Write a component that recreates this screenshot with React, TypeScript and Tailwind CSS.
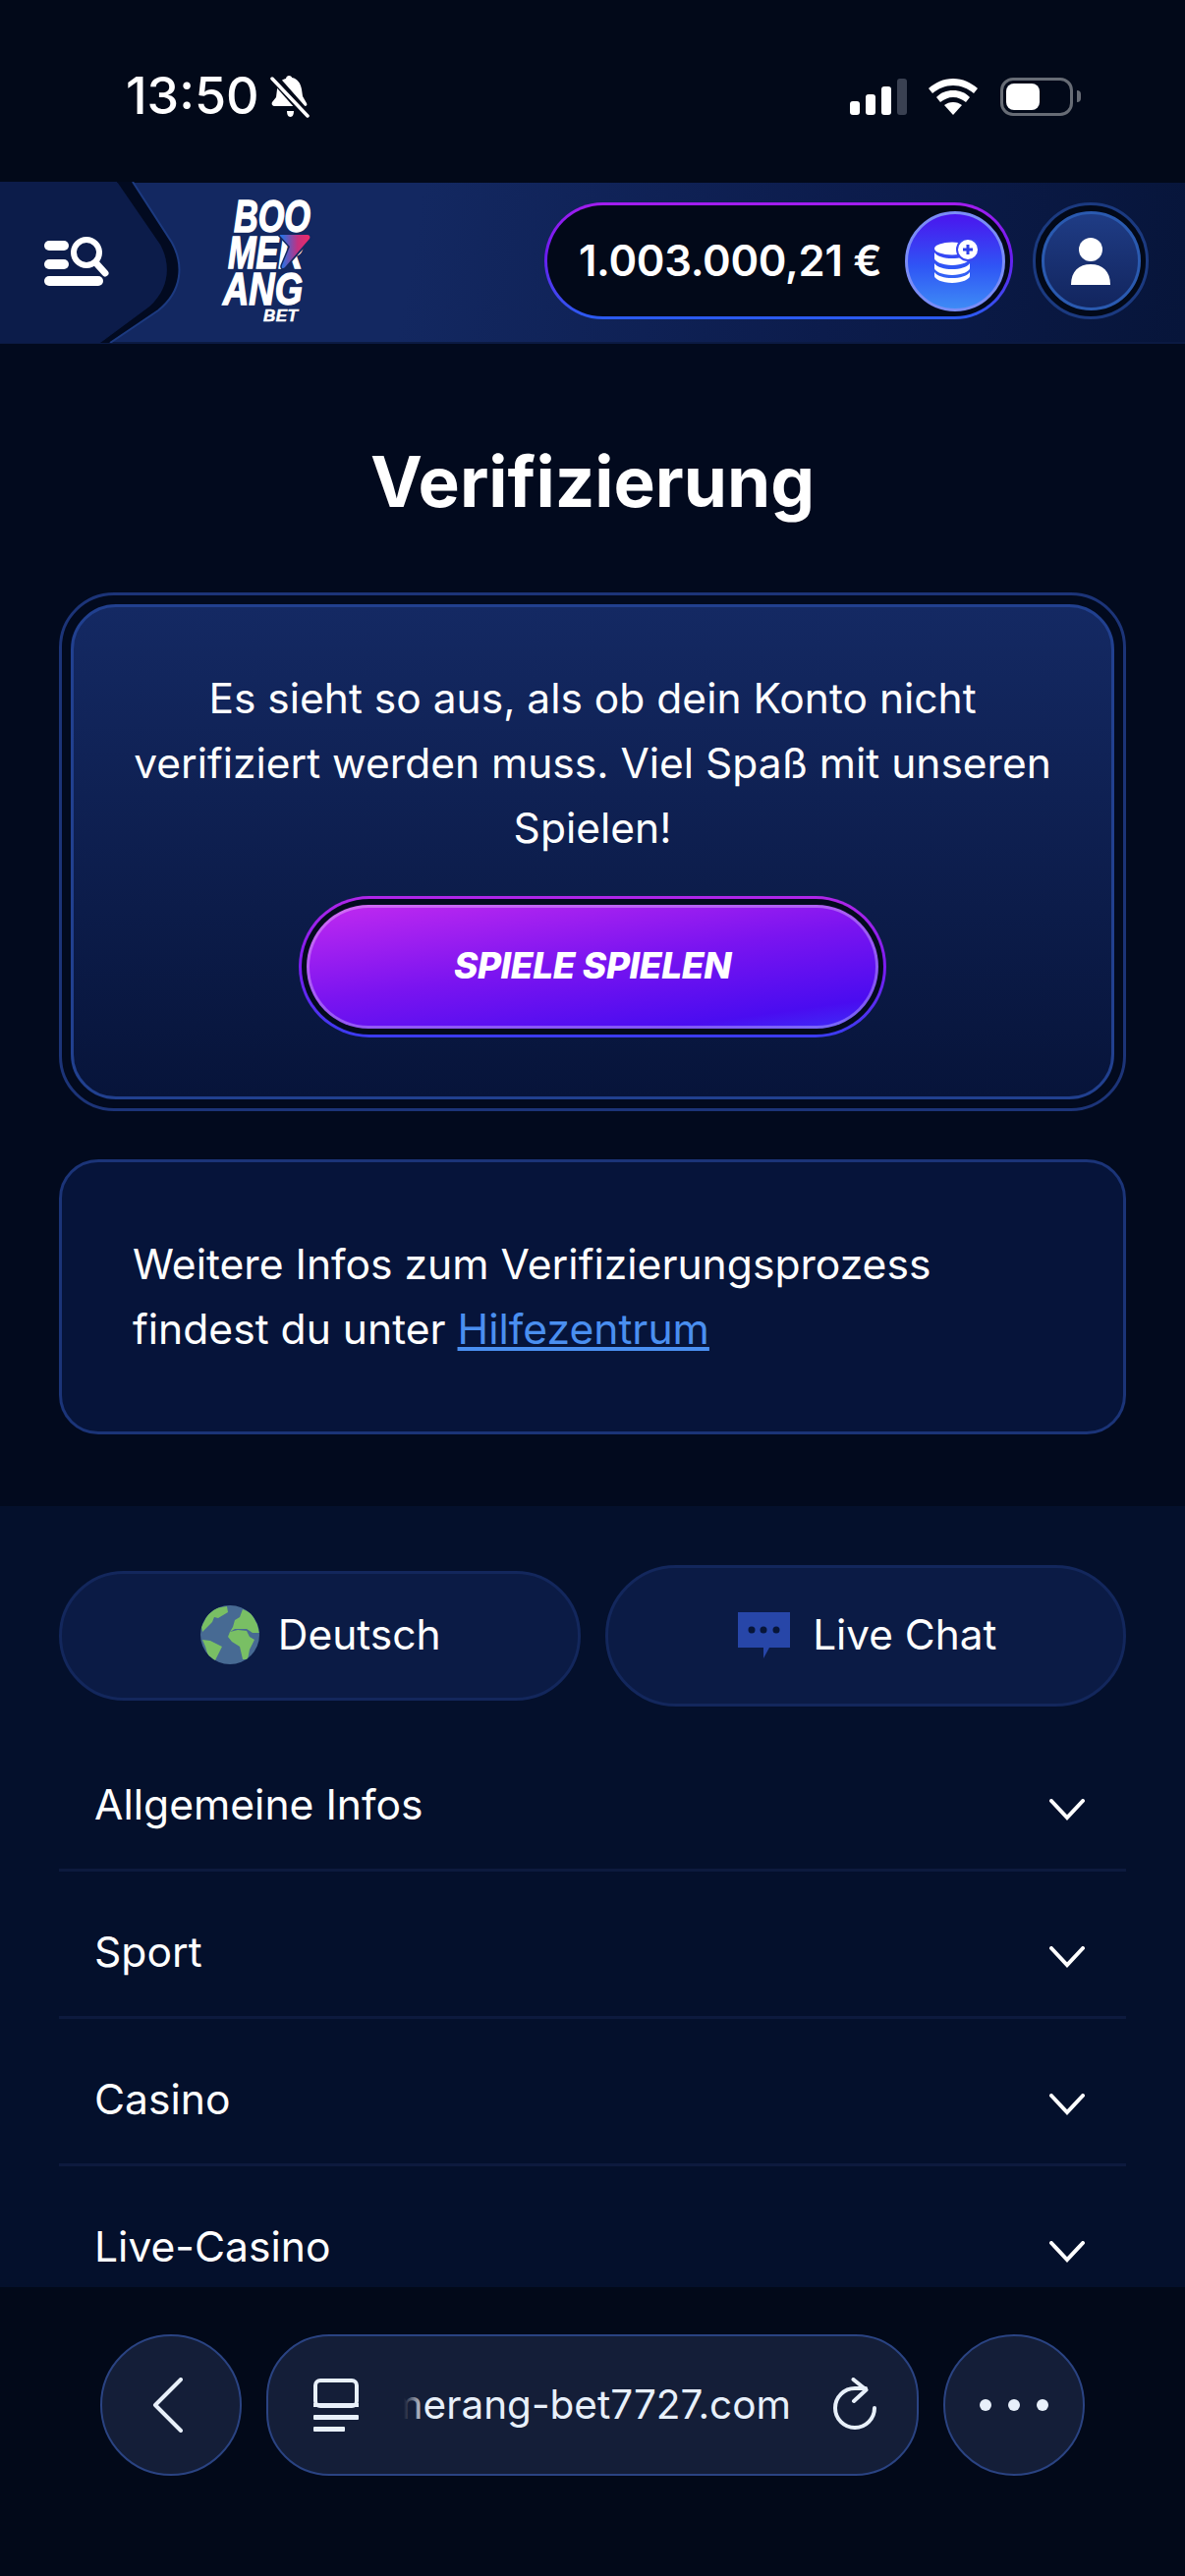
const ROWS = ["Allgemeine Infos", "Sport", "Casino", "Live-Casino"];

function BellOff() {
  return (
    <svg width="40" height="44" viewBox="0 0 40 44">
      <path
        d="M19 1c2 0 3 1 3 2 6 1 9 6 10 12l1 7 4 7c1 2 0 3-2 3H5c-3 0-4-2-3-4l4-5 1-8c1-6 4-10 9-11 0-2 2-3 3-3z"
        fill="#fff"
      />
      <path d="M17 37h7c0 3-1 6-3.500 6S17 40 17 37z" fill="#fff" />
      <path d="M1 0l38 43" stroke="#020919" strokeWidth="9" />
      <path d="M2 4l36 38" stroke="#fff" strokeWidth="3.500" strokeLinecap="round" />
    </svg>
  );
}

function StatusIcons() {
  return (
    <div className="flex items-center">
      <div className="flex items-end gap-[6px] h-[37px]">
        <div className="w-[10px] h-[14px] rounded-[3px] bg-white" />
        <div className="w-[10px] h-[21px] rounded-[3px] bg-white" />
        <div className="w-[10px] h-[29px] rounded-[3px] bg-white" />
        <div className="w-[10px] h-[37px] rounded-[3px] bg-[#3a4152]" />
      </div>
      <svg className="ml-[22px]" width="50" height="37" viewBox="0 0 50 37">
        <path d="M25 0c10 0 18 4 25 10l-4 5c-6-5-13-8-21-8S10 10 4 15l-4-5C7 4 15 0 25 0z" fill="#fff" />
        <path d="M25 12c7 0 12 2 17 7l-4 5c-4-3-8-5-13-5s-9 2-13 5l-4-5c5-5 10-7 17-7z" fill="#fff" />
        <path d="M25 24c4 0 6 1 9 3L25 37l-9-10c3-2 5-3 9-3z" fill="#fff" />
      </svg>
      <div className="ml-[23px] w-[74px] h-[39px] rounded-[13px] border-[3px] border-[#676c75] p-[3px]">
        <div className="w-[34px] h-full rounded-[8px] bg-white" />
      </div>
      <div className="ml-[4px] w-[4px] h-[12px] rounded-r-full bg-[#676c75]" />
    </div>
  );
}

// left tab of the header: menu/search button and logo
function HeaderLeft() {
  return (
    <svg width="330" height="164" viewBox="0 186 330 164" className="shrink-0">
      <defs>
        <linearGradient id="boom" x1="0" y1="0" x2="1" y2="0">
          <stop offset="0.1" stopColor="#2f6fe0" />
          <stop offset="0.6" stopColor="#c4307f" />
          <stop offset="1" stopColor="#ee2a68" />
        </linearGradient>
      </defs>
      <path d="M0 186h119L163 250C173 268 174 293 152 313L102 350H0z" fill="#0c1c4a" />
      <path d="M119 186h16L175 248C187 270 186 297 161 317L112 350h-10L152 313C174 293 173 268 163 250z" fill="#020a20" />
      <path d="M135 186L175 248C187 270 186 297 161 317L112 350" fill="none" stroke="#1c3a80" strokeWidth="2" />
      <g fill="#fff">
        <rect x="45" y="246" width="25" height="10" rx="5" />
        <rect x="45" y="265" width="25" height="10" rx="5" />
        <rect x="45" y="282" width="60" height="10" rx="5" />
      </g>
      <circle cx="88" cy="258" r="13" fill="none" stroke="#fff" strokeWidth="6" />
      <path d="M98 269l9 10" stroke="#fff" strokeWidth="7" strokeLinecap="round" />
      <g fill="#fff" stroke="#fff" strokeWidth="1.500" fontFamily="Liberation Sans, sans-serif" fontWeight="700" fontStyle="italic" fontSize="47">
        <text x="238" y="237" textLength="78" lengthAdjust="spacingAndGlyphs">BOO</text>
        <text x="232" y="274" textLength="76" lengthAdjust="spacingAndGlyphs">MER</text>
        <text x="227" y="311" textLength="81" lengthAdjust="spacingAndGlyphs">ANG</text>
        <text x="268" y="328" fontSize="17" strokeWidth="0.500" textLength="35" lengthAdjust="spacing">BET</text>
      </g>
      <path d="M284 240h28c3 0 5 2 3 5l-25 28c-2 2-4 1-3-2l8-19z" fill="#132861" stroke="#132861" strokeWidth="3" />
      <path d="M285 241c-1-1 0-1 1-1h27c2 0 3 2 2 4l-25 29c-2 2-4 1-3-2l8-19z" fill="url(#boom)" />
    </svg>
  );
}

function CoinIcon() {
  return (
    <svg width="46" height="44" viewBox="0 0 46 44">
      <g fill="#fff">
        <ellipse cx="18" cy="9" rx="18" ry="6.500" />
        <path d="M0 13c3 4 10 6 18 6s15-2 18-6v6c0 3-8 7-18 7S0 22 0 19z" />
        <path d="M0 24c3 4 10 6 18 6s15-2 18-6v5c0 3-8 7-18 7S0 32 0 29z" />
        <path d="M0 33c3 4 10 6 18 6s15-2 18-6v4c0 3-8 7-18 7S0 40 0 37z" />
      </g>
      <circle cx="34" cy="10" r="12" fill="#3a47f2" />
      <circle cx="34" cy="10" r="10" fill="#fff" />
      <path d="M34 5v10M29 10h10" stroke="#2f3fe8" strokeWidth="3" />
    </svg>
  );
}

function Globe() {
  return (
    <svg width="60" height="60" viewBox="0 0 60 60">
      <clipPath id="earth">
        <circle cx="30" cy="30" r="30" />
      </clipPath>
      <g clipPath="url(#earth)">
        <rect width="60" height="60" fill="#476a93" />
        <g fill="#79bf64">
          <path d="M15 3l12-2 1 6-10 6-4-1-2 5L2 27l-1-5 6-12z" />
          <path d="M43 4l9 4 6 12 2 8h-7l-6-4H35l-5 3 3-5 2-7 5-3z" />
          <path d="M30 27l8-2 9 1 3 6 5 3-5 10-2 10h-5l-3-13-8-5-4-5z" />
          <path d="M2 35l8 1 12 6-4 8-4 8-6-6-3-10z" />
        </g>
      </g>
    </svg>
  );
}

function ChatIcon() {
  return (
    <svg width="53" height="47" viewBox="0 0 53 47">
      <path d="M0 0h53v36H32l-6 11v-11H0z" fill="#2746a8" />
      <g fill="#071538">
        <circle cx="14" cy="18" r="3.500" />
        <circle cx="26" cy="18" r="3.500" />
        <circle cx="39" cy="18" r="3.500" />
      </g>
    </svg>
  );
}

function Chevron() {
  return (
    <svg width="36" height="22" viewBox="0 0 36 22" className="mt-[10px]">
      <path d="M2 2l16 17L34 2" fill="none" stroke="#fff" strokeWidth="4" strokeLinecap="round" />
    </svg>
  );
}

export default function App() {
  return (
    <div className="w-[1206px] h-[2622px] overflow-hidden flex flex-col bg-[#020a1e] text-white font-['Inter',sans-serif]">
      {/* Status bar */}
      <div className="h-[186px] shrink-0 pt-[10px] pl-[128px] pr-[106px] flex items-center justify-between bg-[#020919]">
        <div className="flex items-center gap-[11px]">
          <span className="text-[52px] leading-none font-medium">13:50</span>
          <BellOff />
        </div>
        <StatusIcons />
      </div>

      {/* Header */}
      <div className="h-[164px] shrink-0 flex items-center border-b-2 border-[#0b1a42] bg-[linear-gradient(100deg,#132861_0%,#132861_35%,#0c1c4c_70%,#07153a_100%)]">
        <HeaderLeft />
        <div className="ml-auto mr-[37px] mb-[3px] flex items-center gap-[20px]">
          <div className="w-[477px] h-[119px] rounded-full p-[3px] bg-[linear-gradient(180deg,#a31df0_0%,#6a1cf0_45%,#2a5cf0_100%)]">
            <div className="h-full rounded-full bg-[#020919] flex items-center justify-between pl-[32px] pr-[5px]">
              <span className="text-[43.500px] font-semibold tracking-[-0.3px] whitespace-nowrap">1.003.000,21 €</span>
              <div className="w-[102px] h-[102px] rounded-full border-[3px] border-[#7a8cf6] bg-origin-border bg-[linear-gradient(180deg,#4c11ee_0%,#2f55f5_55%,#3f8ff5_100%)] flex items-center justify-center pl-[4px]">
                <CoinIcon />
              </div>
            </div>
          </div>
          <div className="w-[118px] h-[119px] rounded-full border-[3px] border-[#1b3a80] bg-[#020919] flex items-center justify-center">
            <div className="w-[101px] h-[101px] rounded-full border-[3px] border-[#2a5ab0] bg-[linear-gradient(180deg,#1f3c85_0%,#12255e_100%)] flex items-center justify-center">
              <svg width="40" height="48" viewBox="0 0 40 48">
                <ellipse cx="20" cy="12" rx="12" ry="12" fill="#fff" />
                <path d="M0 48c0-14 8-21 20-21s20 7 20 21z" fill="#fff" />
              </svg>
            </div>
          </div>
        </div>
      </div>

      {/* Main content */}
      <div className="shrink-0 px-[60px] pt-[100px] pb-[73px] bg-[#020a1e]">
        <h1 className="text-[71px] leading-[80px] font-bold text-center">Verifizierung</h1>

        <div className="mt-[73px] h-[528px] rounded-[56px] border-[3px] border-[#1c3478] p-[9px]">
          <div className="h-full rounded-[46px] border-[3px] border-[#21408f] bg-[linear-gradient(180deg,#142963_0%,#07143a_100%)] px-[48px] pt-[60px] flex flex-col items-center">
            <p className="text-[42.500px] leading-[66px] text-center">
              Es sieht so aus, als ob dein Konto nicht verifiziert werden muss. Viel Spaß mit unseren Spielen!
            </p>
            <div className="mt-[36px] w-[598px] h-[144px] shrink-0 rounded-full p-[3px] bg-[linear-gradient(180deg,#b026e8_0%,#7a1cf0_50%,#3a3cf0_100%)]">
              <div className="h-full rounded-full bg-[#030a1e] flex items-center justify-center">
                <div className="w-[582px] h-[126px] rounded-full border-[3px] border-white/30 bg-origin-border bg-[linear-gradient(172deg,#c22af0_0%,#7a14f0_48%,#4a0cf0_85%,#3c30f8_100%)] flex items-center justify-center pb-[2px]">
                  <span className="text-[37px] font-extrabold italic tracking-[-0.4px]">SPIELE SPIELEN</span>
                </div>
              </div>
            </div>
          </div>
        </div>

        <div className="mt-[49px] h-[280px] rounded-[40px] border-[3px] border-[#1b3478] bg-[#06143a] pl-[72px] pt-[71px]">
          <p className="text-[42.600px] leading-[66px]">
            Weitere Infos zum Verifizierungsprozess
            <br />
            findest du unter <span className="text-[#4a8ff0] underline">Hilfezentrum</span>
          </p>
        </div>
      </div>

      {/* Footer links */}
      <div className="flex-1 min-h-0 overflow-hidden bg-[#04102c] px-[60px] pt-[60px]">
        <div className="flex items-center gap-[25px]">
          <div className="flex-1 h-[132px] rounded-full border-[3px] border-[#13275c] bg-[#0b1b45] flex items-center justify-center gap-[19px] pb-[2px]">
            <div className="ml-[2px] flex">
              <Globe />
            </div>
            <span className="text-[42.500px]">Deutsch</span>
          </div>
          <div className="flex-1 h-[144px] rounded-full border-[3px] border-[#13275c] bg-[#0b1b45] flex items-center justify-center gap-[23px] pb-[2px]">
            <div className="ml-[4px] flex">
              <ChatIcon />
            </div>
            <span className="text-[42.300px]">Live Chat</span>
          </div>
        </div>
        <div className="mt-[18px]">
          {ROWS.map((row) => (
            <div
              key={row}
              className="h-[150px] shrink-0 pt-[16px] pl-[36px] pr-[42px] flex items-center justify-between border-b-[3px] border-[#0d1a3e]"
            >
              <span className="text-[42.600px]">{row}</span>
              <Chevron />
            </div>
          ))}
        </div>
      </div>

      {/* Browser bar */}
      <div className="h-[294px] shrink-0 bg-[#020919] pt-[48px] pl-[102px] flex items-start gap-[25px]">
        <div className="w-[144px] h-[144px] rounded-full border-2 border-[#2a4382] bg-[#141e38] flex items-center justify-center pr-[6px]">
          <svg width="32" height="56" viewBox="0 0 32 56">
            <path d="M29 2L3 28l26 26" fill="none" stroke="#e8f0fa" strokeWidth="4" strokeLinecap="round" strokeLinejoin="round" />
          </svg>
        </div>
        <div className="w-[664px] h-[144px] rounded-[64px] border-2 border-[#2a4382] bg-[#141e38] flex items-center pl-[46px] pr-[41px]">
          <svg width="46" height="54" viewBox="0 0 46 54" className="shrink-0">
            <rect x="2" y="2" width="42" height="26" rx="5" fill="none" stroke="#e8f0fa" strokeWidth="4" />
            <rect x="0" y="25" width="46" height="4" fill="#e8f0fa" />
            <rect x="0" y="37" width="46" height="5" rx="1" fill="#e8f0fa" />
            <rect x="0" y="49" width="32" height="5" rx="1" fill="#e8f0fa" />
          </svg>
          <div className="relative ml-[46px] w-[394px] h-[60px] overflow-hidden flex items-center justify-end">
            <span className="text-[40.500px] whitespace-nowrap text-[#e8f0fa]">boomerang-bet7727.com</span>
            <div className="absolute left-0 top-0 h-full w-[22px] bg-[linear-gradient(90deg,#141e38,transparent)]" />
          </div>
          <svg width="44" height="56" viewBox="0 0 44 56" className="ml-auto shrink-0">
            <path d="M42 31A20 20 0 1 1 22 11H33" fill="none" stroke="#e8f0fa" strokeWidth="4" strokeLinecap="round" />
            <path d="M20.500 2L33.500 12.500 21 24" fill="none" stroke="#e8f0fa" strokeWidth="4" strokeLinecap="round" strokeLinejoin="round" />
          </svg>
        </div>
        <div className="w-[144px] h-[144px] rounded-full border-2 border-[#2a4382] bg-[#141e38] flex items-center justify-center gap-[17px]">
          <div className="w-[12px] h-[12px] rounded-full bg-[#e8f0fa]" />
          <div className="w-[12px] h-[12px] rounded-full bg-[#e8f0fa]" />
          <div className="w-[12px] h-[12px] rounded-full bg-[#e8f0fa]" />
        </div>
      </div>
    </div>
  );
}
